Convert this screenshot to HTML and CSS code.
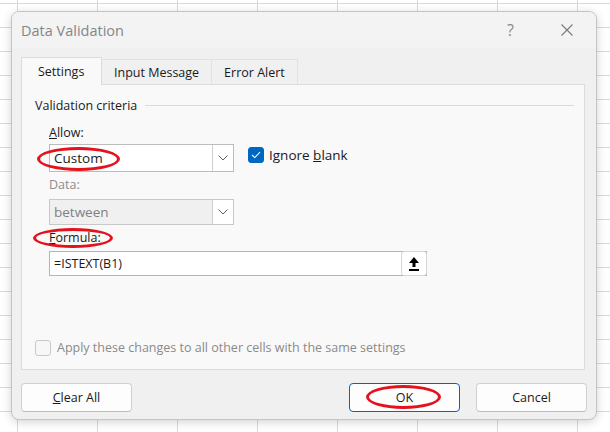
FILE: index.html
```html
<!DOCTYPE html>
<html lang="en">
<head>
    <meta charset="UTF-8">
    <title>Data Validation</title>
    <link rel="stylesheet" href="styles.css">
</head>
<body>
    <div class="dialog">
        <!-- title bar -->
        <div class="titlebar">
            <span class="title">Data Validation</span>
            <span class="help">?</span>
            <span class="close">
                <svg width="12" height="12" viewBox="0 0 12 12"><path d="M0.5 0.5 L11.5 11.5 M11.5 0.5 L0.5 11.5" stroke="#7a7a7a" stroke-width="1.1" fill="none"/></svg>
            </span>
        </div>

        <!-- tabs -->
        <div class="tabs">
            <div class="tab active">Settings</div>
            <div class="tab">Input Message</div>
            <div class="tab">Error Alert</div>
        </div>

        <div class="panel">
            <div class="legend"><span>Validation criteria</span><span class="rule"></span></div>
            <div class="criteria">
                <div class="label"><u>A</u>llow:</div>
                <div class="row">
                    <div class="select">
                        <span class="value">Custom</span>
                        <span class="drop">
                            <svg width="10" height="6" viewBox="0 0 10 6"><path d="M0.5 0.5 L5 5 L9.5 0.5" stroke="#606060" stroke-width="1" fill="none"/></svg>
                        </span>
                    </div>
                    <label class="check">
                        <span class="box on">
                            <svg width="10" height="8" viewBox="0 0 10 8"><path d="M1 4 L3.8 6.6 L9 1.2" stroke="#fff" stroke-width="1.1" fill="none"/></svg>
                        </span>
                        <span>Ignore <u>b</u>lank</span>
                    </label>
                </div>
                <div class="label dim">Data:</div>
                <div class="select disabled">
                    <span class="value">between</span>
                    <span class="drop">
                        <svg width="10" height="6" viewBox="0 0 10 6"><path d="M0.5 0.5 L5 5 L9.5 0.5" stroke="#606060" stroke-width="1" fill="none"/></svg>
                    </span>
                </div>
                <div class="label"><u>F</u>ormula:</div>
                <div class="formula">
                    <span class="value">=ISTEXT(B1)</span>
                    <span class="pick">
                        <svg width="12" height="16" viewBox="0 0 12 16"><path d="M6 1 L11 7 L7.5 7 L7.5 11 L4.5 11 L4.5 7 L1 7 Z" fill="#000"/><rect x="1" y="13" width="10" height="2" fill="#000"/></svg>
                    </span>
                </div>
            </div>
            <div class="apply">
                <span class="box"></span>
                <span>Apply these changes to all other cells with the same settings</span>
            </div>
        </div>

        <div class="buttons">
            <div class="btn"><span><u>C</u>lear All</span></div>
            <div class="spacer"></div>
            <div class="btn default">OK</div>
            <div class="btn">Cancel</div>
        </div>
    </div>

    <!-- red annotation marks -->
    <div class="mark mark-custom"></div>
    <div class="mark mark-formula"></div>
    <div class="mark mark-ok"></div>
</body>
</html>
```

FILE: styles.css
```css
*{
    box-sizing: border-box;
}
html{
    height: 100%;
}
body{
    margin: 0;
    height: 100%;
    overflow: hidden;
    font-family: "Open Sans", "Noto Sans", sans-serif;
    font-size: 12.5px;
    color: #1a1a1a;
    background-color: #fff;
    background-image:
        repeating-linear-gradient(to right, transparent 0, transparent 17px, #d9d9d9 17px, #d9d9d9 18px, transparent 18px, transparent 80px),
        repeating-linear-gradient(to bottom, transparent 0, transparent 3px, #d9d9d9 3px, #d9d9d9 4px, transparent 4px, transparent 24px);
    background-size: 80px 100%, 100% 24px;
    padding: 11px 0 0 11px;
}
.dialog{
    width: 586px;
    height: 409px;
    display: flex;
    flex-direction: column;
    background-color: #f0f0f0;
    border: 1px solid #c4c4c4;
    border-radius: 8px;
    box-shadow: 0 2px 10px rgba(0, 0, 0, 0.18);
    overflow: hidden;
}
.titlebar{
    height: 36px;
    display: flex;
    align-items: center;
    background-color: #f3f3f3;
    padding-left: 9px;
}
.title{
    flex: 1;
    font-size: 14.5px;
    color: #868686;
}
.help{
    font-size: 16px;
    color: #8a8a8a;
    margin-right: 47px;
}
.close{
    display: flex;
    margin-right: 23px;
}
.tabs{
    display: flex;
    align-items: flex-end;
    margin: 9px 0 0 9px;
    height: 27px;
    position: relative;
    z-index: 1;
}
.tab{
    height: 25px;
    padding: 0 12px;
    display: flex;
    align-items: center;
    border: 1px solid #e2e2e2;
    border-bottom: 0;
    background-color: #f0f0f0;
}
.tab + .tab{
    border-left: 0;
}
.tab.active{
    height: 28px;
    width: 81px;
    padding-left: 16px;
    background-color: #f9f9f9;
    border-color: #dcdcdc;
    margin-bottom: -1px;
}
.panel{
    height: 286px;
    margin: 0 11px 0 9px;
    background-color: #f9f9f9;
    border: 1px solid #dcdcdc;
    padding: 0 0 13px 13px;
    display: flex;
    flex-direction: column;
}
.legend{
    height: 18px;
    margin-top: 11px;
    display: flex;
    align-items: center;
    padding-right: 10px;
}
.rule{
    flex: 1;
    height: 1px;
    background-color: #dadada;
    margin-left: 8px;
}
.criteria{
    padding-left: 14px;
    display: flex;
    flex-direction: column;
    align-items: flex-start;
}
.label{
    height: 18px;
    line-height: 18px;
}
.label:nth-child(1){
    margin-top: 10px;
}
.dim{
    color: #8c8c8c;
    margin-top: 4px;
}
.label:nth-child(5){
    margin-top: 4px;
}
.row{
    display: flex;
    align-items: flex-start;
    margin-top: 2px;
}
.select{
    width: 185px;
    height: 28px;
    display: flex;
    background-color: #fff;
    border: 1px solid #bcbcbc;
}
.select .value{
    flex: 1;
    display: flex;
    align-items: center;
    padding-left: 4px;
    font-size: 13.5px;
}
.drop{
    width: 21px;
    display: flex;
    align-items: center;
    justify-content: center;
    border-left: 1px solid #cfcfcf;
    background-color: #fff;
}
.select.disabled{
    height: 26px;
    margin-top: 5px;
    background-color: #f0f0f0;
    border-color: #c8c8c8;
}
.select.disabled .value{
    color: #808080;
}
.check{
    display: flex;
    align-items: center;
    margin: 2px 0 0 14px;
    font-size: 13.5px;
    gap: 5px;
}
.box{
    width: 16px;
    height: 16px;
    border-radius: 3px;
    border: 1px solid #c8c8c8;
    background-color: #f7f7f7;
    display: flex;
    align-items: center;
    justify-content: center;
}
.box.on{
    background-color: #0067c0;
    border-color: #0067c0;
}
.formula{
    width: 378px;
    height: 25px;
    margin-top: 4px;
    display: flex;
    background-color: #fff;
    border: 1px solid #b4b4b4;
}
.formula .value{
    flex: 1;
    display: flex;
    align-items: center;
    padding-left: 4px;
}
.pick{
    width: 26px;
    display: flex;
    align-items: center;
    justify-content: center;
    border: 1px solid #d6d6d6;
    border-radius: 3px;
    margin: -1px -1px -1px 0;
}
.apply{
    margin-top: auto;
    display: flex;
    align-items: center;
    gap: 6px;
    color: #8a8a8a;
}
.buttons{
    display: flex;
    margin: 13px 9px 0 9px;
    gap: 16px;
}
.spacer{
    flex: 1;
}
.btn{
    width: 111px;
    height: 29px;
    display: flex;
    align-items: center;
    justify-content: center;
    background-color: #fdfdfd;
    border: 1px solid #d0d0d0;
    border-bottom-color: #bcbcbc;
    border-radius: 4px;
}
.btn.default{
    border-color: #0067c0;
}
.mark{
    position: absolute;
    border: 3px solid #e3121d;
    border-radius: 50%;
}
.mark-custom{
    left: 37px;
    top: 147px;
    width: 83px;
    height: 24px;
}
.mark-formula{
    left: 33px;
    top: 228px;
    width: 80px;
    height: 20px;
}
.mark-ok{
    left: 366px;
    top: 385px;
    width: 75px;
    height: 24px;
}
```
